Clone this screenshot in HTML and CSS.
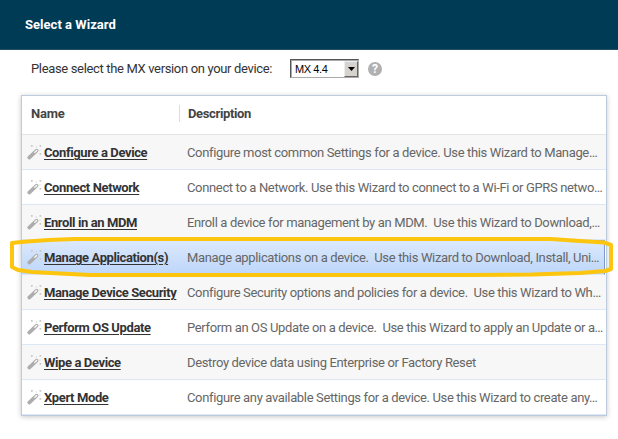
FILE: index.html
```html
<!DOCTYPE html>
<html lang="en">
<head>
<meta charset="utf-8">
<title>Select a Wizard</title>
<link rel="stylesheet" href="styles.css">
</head>
<body>
<svg width="0" height="0" class="defs">
  <symbol id="wand" viewBox="0 0 15 15">
    <path d="M2.200 12.600 L9.600 5.600" stroke="#adadad" stroke-width="3.6" stroke-linecap="round"/>
    <path d="M7.800 7.300 L9.600 5.600" stroke="#f4f4f4" stroke-width="1.5" stroke-linecap="round"/>
    <path d="M4 0h1.700v1.700H4zM12.500 0h1.700v1.700h-1.700zM8.800 1.500h1v1h-1zM12.500 8h1.700v1.700h-1.700zM12.500 4.500h1v1h-1z" fill="#c8c8c8"/>
  </symbol>
</svg>
<header class="titlebar">Select a Wizard</header>
<main>
  <div class="version">
    <span class="prompt">Please select the MX version on your device:</span>
    <div class="select"><span>MX 4.4</span><i class="arrow"><svg width="7" height="4" viewBox="0 0 7 4"><path d="M0 0h7L3.5 4z"/></svg></i></div>
    <span class="help">?</span>
  </div>
  <section class="grid">
    <div class="head"><span class="name">Name</span><span class="desc">Description</span></div>
    <div class="row"><svg class="icon"><use href="#wand"/></svg><a>Configure a Device</a><span class="desc">Configure most common Settings for a device. Use this Wizard to Manage…</span></div>
    <div class="row"><svg class="icon"><use href="#wand"/></svg><a>Connect Network</a><span class="desc">Connect to a Network. Use this Wizard to connect to a Wi-Fi or GPRS netwo…</span></div>
    <div class="row"><svg class="icon"><use href="#wand"/></svg><a>Enroll in an MDM</a><span class="desc">Enroll a device for management by an MDM.&nbsp; Use this Wizard to Download,…</span></div>
    <div class="row selected"><svg class="icon"><use href="#wand"/></svg><a>Manage Application(s)</a><span class="desc">Manage applications on a device.&nbsp; Use this Wizard to Download, Install, Uni…</span></div>
    <div class="row"><svg class="icon"><use href="#wand"/></svg><a>Manage Device Security</a><span class="desc">Configure Security options and policies for a device.&nbsp; Use this Wizard to Wh…</span></div>
    <div class="row"><svg class="icon"><use href="#wand"/></svg><a>Perform OS Update</a><span class="desc">Perform an OS Update on a device.&nbsp; Use this Wizard to apply an Update or a…</span></div>
    <div class="row"><svg class="icon"><use href="#wand"/></svg><a>Wipe a Device</a><span class="desc">Destroy device data using Enterprise or Factory Reset</span></div>
    <div class="row"><svg class="icon"><use href="#wand"/></svg><a>Xpert Mode</a><span class="desc">Configure any available Settings for a device. Use this Wizard to create any…</span></div>
  </section>
</main>
<svg class="marker" viewBox="0 0 618 439"><path d="M12 243 L21 242 L48 240 L75 239 L551 239 L580 241 L604 242.500 L611 245 L611 269 L605 271 L580 273 L532 274.500 L470 275 L90 275 L60 273.500 L32 272 L18 270 L12 267 Z"/></svg>
</body>
</html>
```
FILE: styles.css
```css
* { box-sizing: border-box; }
body { margin: 0; width: 618px; height: 439px; overflow: hidden; position: relative; background: #fff; font: 13px/20px Roboto, sans-serif; color: #666; }
.defs { display: block; position: absolute; }
.titlebar { height: 50px; padding: 0 25px; background: #003b56; border-bottom: 1px solid #234f66; color: #fff; font-weight: 700; line-height: 49px; letter-spacing: .03px; }
.version { display: flex; align-items: center; height: 45px; padding: 0 0 8px 31px; color: #333; }
.prompt { width: 259px; white-space: nowrap; letter-spacing: -.345px; }
.select { display: flex; justify-content: space-between; width: 69px; height: 19px; border: 1px solid #aaa; border-top-color: #555; border-left-color: #555; background: #fff; box-shadow: inset 1px 1px #aaa; color: #000; font-family: "Liberation Sans", sans-serif; font-size: 11px; letter-spacing: -.4px; padding: 1px 0 0 4px; line-height: 17px; }
.arrow { display: flex; align-items: center; justify-content: center; width: 14px; height: 16px; background: #d6d3ce; border: 1px solid #eee; border-right-color: #666; border-bottom-color: #666; }
.help { width: 14px; height: 14px; margin-left: 9px; border-radius: 50%; background: #b0b0b0; color: #fff; font-size: 12px; line-height: 14px; font-weight: 700; text-align: center; }
.grid { width: 586px; height: 321px; margin-left: 21px; border: 1px solid #bdcbdc; box-shadow: 0 1px 5px rgba(0,0,0,.22); background: #fff; }
.head { display: flex; align-items: center; height: 39px; padding-bottom: 3px; border-bottom: 1px solid #e4e4e4; font-weight: 700; color: #444; letter-spacing: -.36px; line-height: 17px; }
.head .name { width: 157px; padding-left: 9px; letter-spacing: -.25px; }
.head .desc { height: 17px; border-left: 1px solid #ddd; padding-left: 8px; }
.row { display: flex; align-items: center; height: 35px; padding: 2px 0 0 5px; border-bottom: 1px solid #dce8f6; background: #fff; white-space: nowrap; letter-spacing: -.35px; }
.row:nth-child(even) { background: #f7f7f7; }
.icon { width: 15px; height: 15px; margin: 0 2px 2px 0; flex: none; }
.row a { color: #333; font-weight: 700; text-decoration: underline; text-underline-offset: 2px; text-decoration-thickness: 1px; letter-spacing: -.39px; }
.row .desc { margin-left: auto; width: 419px; }
.row.selected { margin-right: 1px; padding-top: 1px; background: linear-gradient(#dce9fc, #bdd6fa); border-right: 1px solid #7c9dcc; border-top: 1px solid #91add2; }
.row.selected .desc { width: 417px; }
.marker { position: absolute; left: 0; top: 0; width: 618px; height: 439px; fill: none; stroke: #fdc50d; stroke-width: 4; stroke-linejoin: round; }
```
